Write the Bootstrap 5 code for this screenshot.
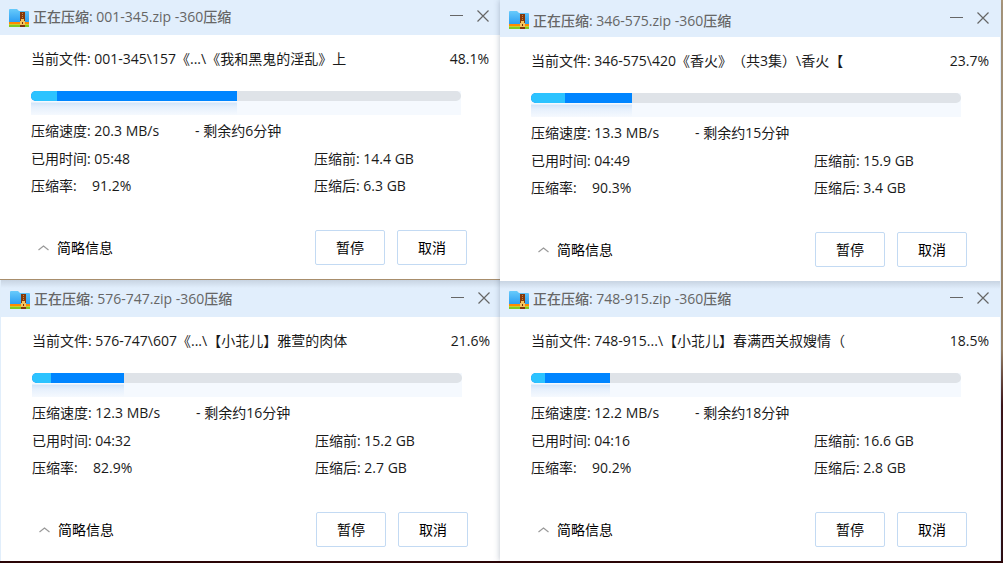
<!DOCTYPE html>
<html lang="zh-CN">
<head>
<meta charset="utf-8">
<meta name="viewport" content="width=device-width, initial-scale=1">
<title>360压缩</title>
<link href="https://cdn.jsdelivr.net/npm/bootstrap@5.3.0/dist/css/bootstrap.min.css" rel="stylesheet">
<style>
html{min-height:100%;background:linear-gradient(#b39c7c 0,#a58a68 62%,#3c0c0e 72%,#2a0507 100%)}
body{font-family:"Open Sans","Noto Sans CJK SC",sans-serif;font-size:14px;line-height:20px;color:#1a1a1a;
  background:none;font-kerning:none;text-spacing-trim:space-all}
.desk{padding-right:2px}
.pane-a{flex:500 1 0;min-width:0}
.pane-b{flex:501 1 0;min-width:0;z-index:1;box-shadow:0 0 6px rgba(60,80,110,.35)}
.win{background:#fff;border-right:1px solid #e1eefb}
.pane-a .win{border-right:0}
.pane-a .win+.win{margin:1px -1px 0 0;border-left:1px solid #e1eefb}
.bar-top{background:#e1eefc;padding:0 10px 8px 9px;height:37px}
.bar-short{height:35px}
.bar-shade{background:linear-gradient(#c8d4e2,#e1eefc 8px)}
.bar-low{height:36px}
.caption{color:#666;font-size:14px;line-height:20px;margin-left:4px}
.caption-low{line-height:16px}
.tools{gap:12px}
.tool{border:0;background:none;padding:0;width:14px;height:20px;color:#666;line-height:0}
.inner{padding:14px 11px 14px 31px}
.meter{margin:22px 28px 2px 0;background:#f5f9fe}
.track{height:10px;border-radius:5px;background:#dfe3e8;overflow:hidden}
.fill{height:10px;background:#0085ff}
.lead-fill{height:10px;background:#2cc3ff}
.glow{height:14px}
.glow-fill{height:14px;background:linear-gradient(#f5f9fe 1px,#d3e5fa 2px,#e6f0fc 6px,#f5f9fe)}
.info{line-height:28px}
.info-last{line-height:26px}
.c-left{flex:283 1 0}
.c-right{flex:175 1 0}
.speed{width:164px}
.ratio{width:61px}
.foot{margin-top:31px;padding:0 22px 0 7px}
.less{color:#000;border:0;background:none;padding:0;gap:8px}
.acts{gap:12px}
.act{width:70px;height:35px;padding:0;border:1px solid #c3daf3;border-radius:2px;background:#fff;color:#000;font-size:14px;line-height:20px}
</style>
</head>
<body>
<svg width="0" height="0" class="position-absolute" aria-hidden="true">
  <defs>
    <linearGradient id="sky" x1="0" y1="0" x2="0" y2="1"><stop offset="0" stop-color="#67cbfb"/><stop offset="1" stop-color="#2c9df2"/></linearGradient>
    <symbol id="zip" viewBox="0 0 20 18">
      <path d="M0 1q0-1 1-1h7l2 2h9q1 0 1 1v10H0z" fill="url(#sky)"/>
      <path d="M0 13h20v2H0z" fill="#ff8a00"/><path d="M0 15h20v1H0z" fill="#c9cf2c"/><path d="M0 16h20v2H0z" fill="#7ec926"/>
      <path d="M11 3h5v15h-5z" fill="#84390b"/><path d="M13 4h1v1h-1zM13 6h1v1h-1zM13 8h1v1h-1z" fill="#c88a4a"/>
      <path d="M12 10h3v2h1v4h-5v-4h1z" fill="#f5c35c"/><path d="M13 13h1v2h-1z" fill="#713007"/>
    </symbol>
    <symbol id="min" viewBox="0 0 14 20"><path d="M0 8.500h13" stroke="currentColor"/></symbol>
    <symbol id="close" viewBox="0 0 14 20"><path d="M1.500 3.500l11 11M12.500 3.500l-11 11" stroke="currentColor" stroke-width="1.200"/></symbol>
    <symbol id="up" viewBox="0 0 11 6"><path d="M.5 5l5-4 5 4" fill="none" stroke="#999" stroke-width="1.200"/></symbol>
  </defs>
</svg>
<main class="desk d-flex">
  <div class="pane-a">
    <section class="win">
      <header class="bar-top bar-short d-flex align-items-end">
        <svg width="20" height="18"><use href="#zip"/></svg>
        <h1 class="caption mb-0 me-auto">正在压缩: 001-345.zip -360压缩</h1>
        <div class="tools d-flex"><button class="tool" aria-label="最小化"><svg width="14" height="20"><use href="#min"/></svg></button><button class="tool" aria-label="关闭"><svg width="14" height="20"><use href="#close"/></svg></button></div>
      </header>
      <div class="inner">
        <div class="d-flex justify-content-between"><span>当前文件: 001-345\157《...\《我和黑鬼的淫乱》上</span><span>48.1%</span></div>
        <div class="meter">
          <div class="track" role="progressbar" aria-label="压缩进度" aria-valuenow="48.1" aria-valuemin="0" aria-valuemax="100"><div class="fill" style="width:48%"><div class="lead-fill" style="width:12.600%"></div></div></div>
          <div class="glow"><div class="glow-fill" style="width:48%"></div></div>
        </div>
        <div class="info d-flex"><span class="speed">压缩速度: 20.3 MB/s</span><span>- 剩余约6分钟</span></div>
        <div class="info d-flex"><span class="c-left">已用时间: 05:48</span><span class="c-right">压缩前: 14.4 GB</span></div>
        <div class="info info-last d-flex"><span class="c-left d-flex"><span class="ratio">压缩率:</span>91.2%</span><span class="c-right">压缩后: 6.3 GB</span></div>
        <div class="foot d-flex align-items-center">
          <button class="less d-flex align-items-center me-auto"><svg width="11" height="6"><use href="#up"/></svg>简略信息</button>
          <div class="acts d-flex"><button class="btn act">暂停</button><button class="btn act">取消</button></div>
        </div>
      </div>
    </section>
    <section class="win">
      <header class="bar-top bar-shade d-flex align-items-end">
        <svg width="20" height="18"><use href="#zip"/></svg>
        <h1 class="caption mb-0 me-auto">正在压缩: 576-747.zip -360压缩</h1>
        <div class="tools d-flex"><button class="tool" aria-label="最小化"><svg width="14" height="20"><use href="#min"/></svg></button><button class="tool" aria-label="关闭"><svg width="14" height="20"><use href="#close"/></svg></button></div>
      </header>
      <div class="inner">
        <div class="d-flex justify-content-between"><span>当前文件: 576-747\607《...\【小苝儿】雅萱的肉体</span><span>21.6%</span></div>
        <div class="meter">
          <div class="track" role="progressbar" aria-label="压缩进度" aria-valuenow="21.6" aria-valuemin="0" aria-valuemax="100"><div class="fill" style="width:21.500%"><div class="lead-fill" style="width:20.600%"></div></div></div>
          <div class="glow"><div class="glow-fill" style="width:21.500%"></div></div>
        </div>
        <div class="info d-flex"><span class="speed">压缩速度: 12.3 MB/s</span><span>- 剩余约16分钟</span></div>
        <div class="info d-flex"><span class="c-left">已用时间: 04:32</span><span class="c-right">压缩前: 15.2 GB</span></div>
        <div class="info info-last d-flex"><span class="c-left d-flex"><span class="ratio">压缩率:</span>82.9%</span><span class="c-right">压缩后: 2.7 GB</span></div>
        <div class="foot d-flex align-items-center">
          <button class="less d-flex align-items-center me-auto"><svg width="11" height="6"><use href="#up"/></svg>简略信息</button>
          <div class="acts d-flex"><button class="btn act">暂停</button><button class="btn act">取消</button></div>
        </div>
      </div>
    </section>
  </div>
  <div class="pane-b">
    <section class="win">
      <header class="bar-top d-flex align-items-end">
        <svg width="20" height="18"><use href="#zip"/></svg>
        <h1 class="caption caption-low mb-0 me-auto">正在压缩: 346-575.zip -360压缩</h1>
        <div class="tools d-flex"><button class="tool" aria-label="最小化"><svg width="14" height="20"><use href="#min"/></svg></button><button class="tool" aria-label="关闭"><svg width="14" height="20"><use href="#close"/></svg></button></div>
      </header>
      <div class="inner">
        <div class="d-flex justify-content-between"><span>当前文件: 346-575\420《香火》（共3集）\香火【</span><span>23.7%</span></div>
        <div class="meter">
          <div class="track" role="progressbar" aria-label="压缩进度" aria-valuenow="23.7" aria-valuemin="0" aria-valuemax="100"><div class="fill" style="width:23.500%"><div class="lead-fill" style="width:33.700%"></div></div></div>
          <div class="glow"><div class="glow-fill" style="width:23.500%"></div></div>
        </div>
        <div class="info d-flex"><span class="speed">压缩速度: 13.3 MB/s</span><span>- 剩余约15分钟</span></div>
        <div class="info d-flex"><span class="c-left">已用时间: 04:49</span><span class="c-right">压缩前: 15.9 GB</span></div>
        <div class="info info-last d-flex"><span class="c-left d-flex"><span class="ratio">压缩率:</span>90.3%</span><span class="c-right">压缩后: 3.4 GB</span></div>
        <div class="foot d-flex align-items-center">
          <button class="less d-flex align-items-center me-auto"><svg width="11" height="6"><use href="#up"/></svg>简略信息</button>
          <div class="acts d-flex"><button class="btn act">暂停</button><button class="btn act">取消</button></div>
        </div>
      </div>
    </section>
    <section class="win">
      <header class="bar-top bar-shade bar-low d-flex align-items-end">
        <svg width="20" height="18"><use href="#zip"/></svg>
        <h1 class="caption mb-0 me-auto">正在压缩: 748-915.zip -360压缩</h1>
        <div class="tools d-flex"><button class="tool" aria-label="最小化"><svg width="14" height="20"><use href="#min"/></svg></button><button class="tool" aria-label="关闭"><svg width="14" height="20"><use href="#close"/></svg></button></div>
      </header>
      <div class="inner">
        <div class="d-flex justify-content-between"><span>当前文件: 748-915...\【小苝儿】春满西关叔嫂情（</span><span>18.5%</span></div>
        <div class="meter">
          <div class="track" role="progressbar" aria-label="压缩进度" aria-valuenow="18.5" aria-valuemin="0" aria-valuemax="100"><div class="fill" style="width:18.400%"><div class="lead-fill" style="width:17.700%"></div></div></div>
          <div class="glow"><div class="glow-fill" style="width:18.400%"></div></div>
        </div>
        <div class="info d-flex"><span class="speed">压缩速度: 12.2 MB/s</span><span>- 剩余约18分钟</span></div>
        <div class="info d-flex"><span class="c-left">已用时间: 04:16</span><span class="c-right">压缩前: 16.6 GB</span></div>
        <div class="info info-last d-flex"><span class="c-left d-flex"><span class="ratio">压缩率:</span>90.2%</span><span class="c-right">压缩后: 2.8 GB</span></div>
        <div class="foot d-flex align-items-center">
          <button class="less d-flex align-items-center me-auto"><svg width="11" height="6"><use href="#up"/></svg>简略信息</button>
          <div class="acts d-flex"><button class="btn act">暂停</button><button class="btn act">取消</button></div>
        </div>
      </div>
    </section>
  </div>
</main>
<script src="https://cdn.jsdelivr.net/npm/bootstrap@5.3.0/dist/js/bootstrap.bundle.min.js"></script>
</body>
</html>
